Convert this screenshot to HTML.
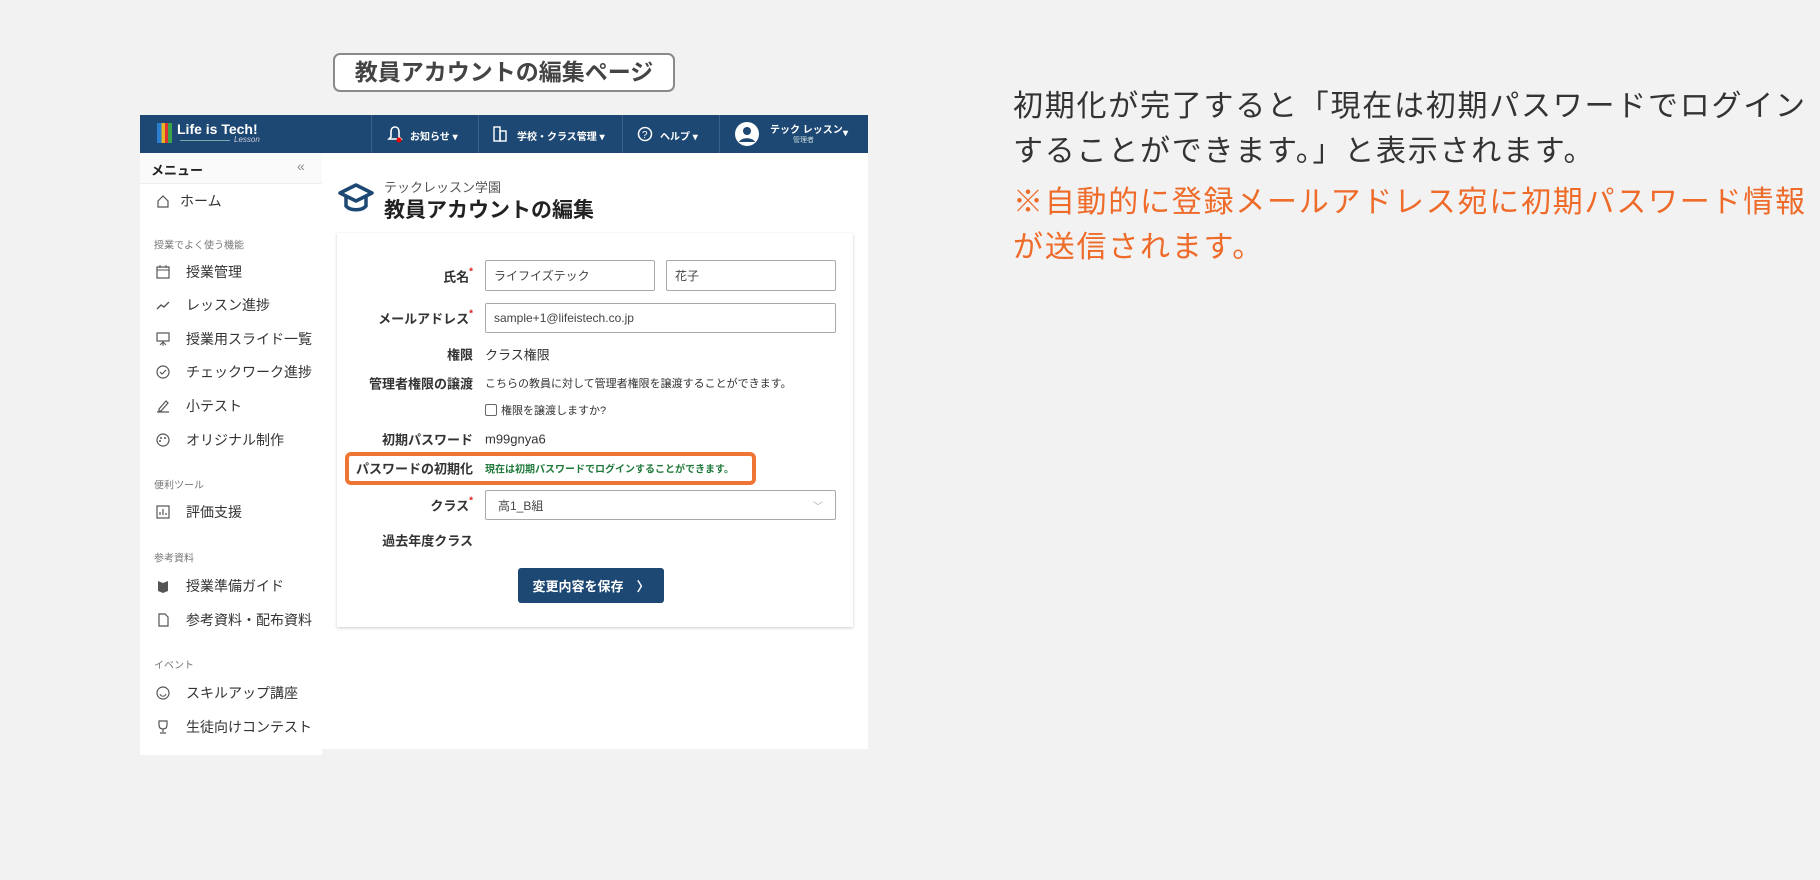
<!DOCTYPE html>
<html><head><meta charset="utf-8"><style>
*{box-sizing:border-box;margin:0;padding:0}
body{width:1820px;height:880px;background:#f2f2f2;font-family:"Liberation Sans","Noto Sans CJK JP",sans-serif;position:relative;overflow:hidden;color:#333}
.abs{position:absolute}
.pill{left:333px;top:53px;width:342px;height:39px;border:2px solid #8a8a8a;border-radius:7px;background:#fff;font-size:23px;font-weight:bold;color:#444;text-align:center;line-height:35px}
.hdr{left:140px;top:115px;width:728px;height:38px;background:#1d4873;color:#fff}
.div{position:absolute;top:0;width:1px;height:38px;background:#3a6189}
.ht{position:absolute;font-size:10px;font-weight:bold;top:13px}
.side{left:140px;top:153px;width:182px;height:602px;background:#fff}
.main{left:322px;top:153px;width:546px;height:596px;background:#fff}
.si{position:absolute;left:46px;font-size:14px;color:#333;transform:translateY(-50%)}
.sec{position:absolute;left:14px;font-size:10px;color:#777;transform:translateY(-50%)}
.ic{position:absolute;left:16px;width:14px;height:14px;transform:translateY(-50%)}
.card{left:337px;top:233px;width:516px;height:394px;background:#fff;box-shadow:0 1px 3px rgba(0,0,0,.2)}
.lb{position:absolute;right:380px;font-size:13px;font-weight:bold;color:#333;transform:translateY(-50%);white-space:nowrap}
.in{position:absolute;border:1px solid #aaa;border-radius:2px;font-size:12px;color:#444;padding-left:8px;display:flex;align-items:center}
.tx{position:absolute;left:148px;font-size:13px;color:#333;transform:translateY(-50%);white-space:nowrap}
.rt{left:1013px;font-size:30px;letter-spacing:1.75px;white-space:nowrap;line-height:45px}
</style></head><body>
<div class="abs pill">教員アカウントの編集ページ</div>

<div class="abs hdr">
 <div style="position:absolute;left:17px;top:8px;width:15px;height:20px;background:linear-gradient(90deg,#2a7fd0 0 30%,#e8b623 30% 55%,#d33 55% 75%,#3aa54a 75%)"></div>
 <div style="position:absolute;left:37px;top:6px;font-size:14px;font-weight:bold">Life is Tech!</div>
 <div style="position:absolute;left:40px;top:25px;width:50px;height:1px;background:#7aa"></div>
 <div style="position:absolute;left:94px;top:20px;font-size:8px;font-style:italic;color:#ccd">Lesson</div>
 <div class="div" style="left:231px"></div><div class="div" style="left:338px"></div><div class="div" style="left:482px"></div><div class="div" style="left:579px"></div>
 <svg style="position:absolute;left:247px;top:10px" width="16" height="18" viewBox="0 0 16 18"><path d="M8 2C5 2 4 4.5 4 7v5l-2 2h12l-2-2V7c0-2.5-1-5-4-5z" fill="none" stroke="#fff" stroke-width="1.6"/><circle cx="12" cy="15" r="2.5" fill="#e00"/></svg>
 <div class="ht" style="left:270px">お知らせ ▾</div>
 <svg style="position:absolute;left:353px;top:11px" width="14" height="16"><rect x="1" y="1" width="6" height="14" fill="none" stroke="#fff" stroke-width="1.4"/><rect x="7" y="5" width="6" height="10" fill="none" stroke="#fff" stroke-width="1.4"/></svg>
 <div class="ht" style="left:377px">学校・クラス管理 ▾</div>
 <svg style="position:absolute;left:497px;top:11px" width="16" height="16"><circle cx="8" cy="8" r="6.5" fill="none" stroke="#fff" stroke-width="1.5"/><text x="5" y="12" font-size="10" fill="#fff" font-family="Liberation Sans">?</text></svg>
 <div class="ht" style="left:520px">ヘルプ ▾</div>
 <svg style="position:absolute;left:595px;top:7px" width="24" height="24"><circle cx="12" cy="12" r="12" fill="#fff"/><circle cx="12" cy="9" r="4" fill="#1d4873"/><path d="M4 20c2-5 14-5 16 0" fill="#1d4873"/></svg>
 <div style="position:absolute;left:630px;top:6px;font-size:10px;font-weight:bold">テック レッスン</div>
 <div style="position:absolute;left:653px;top:20px;font-size:7px;color:#cdd">管理者</div>
 <div class="ht" style="left:703px">▾</div>
</div>

<div class="abs side">
 <div style="position:absolute;left:0;top:0;width:182px;height:31px;border-bottom:1px solid #eee;background:#fafafa"></div>
 <div style="position:absolute;left:11px;top:7px;font-size:13px;font-weight:bold;color:#222">メニュー</div>
 <div style="position:absolute;left:157px;top:5px;font-size:14px;color:#888">«</div>
 <svg class="ic" style="top:48px" viewBox="0 0 14 14"><path d="M2 7L7 2l5 5v6H2z" fill="none" stroke="#555" stroke-width="1.2"/></svg><div class="si" style="top:48px;left:40px">ホーム</div>
 <div class="sec" style="top:91px">授業でよく使う機能</div>
 <svg class="ic" style="top:119px" viewBox="0 0 14 14"><rect x="1" y="2" width="12" height="11" fill="none" stroke="#555" stroke-width="1.2"/><path d="M1 5h12M4 0v3M10 0v3" stroke="#555"/></svg><div class="si" style="top:119px">授業管理</div>
 <svg class="ic" style="top:152px" viewBox="0 0 14 14"><path d="M1 11l4-4 3 2 5-5" fill="none" stroke="#555" stroke-width="1.4"/></svg><div class="si" style="top:152px">レッスン進捗</div>
 <svg class="ic" style="top:186px" viewBox="0 0 14 14"><rect x="1" y="1" width="12" height="8" fill="none" stroke="#555" stroke-width="1.2"/><path d="M7 9v5M4 13l3-3 3 3" stroke="#555" fill="none"/></svg><div class="si" style="top:186px">授業用スライド一覧</div>
 <svg class="ic" style="top:219px" viewBox="0 0 14 14"><circle cx="7" cy="7" r="6" fill="none" stroke="#555" stroke-width="1.2"/><path d="M4 7l2 2 4-4" fill="none" stroke="#555" stroke-width="1.2"/></svg><div class="si" style="top:219px">チェックワーク進捗</div>
 <svg class="ic" style="top:253px" viewBox="0 0 14 14"><path d="M3 10l7-8 2 2-7 8H3zM1 13h12" fill="none" stroke="#555" stroke-width="1.2"/></svg><div class="si" style="top:253px">小テスト</div>
 <svg class="ic" style="top:287px" viewBox="0 0 14 14"><circle cx="7" cy="7" r="6" fill="none" stroke="#555" stroke-width="1.2"/><circle cx="5" cy="5" r="1" fill="#555"/><circle cx="9" cy="5" r="1" fill="#555"/><circle cx="4" cy="8" r="1" fill="#555"/></svg><div class="si" style="top:287px">オリジナル制作</div>
 <div class="sec" style="top:331px">便利ツール</div>
 <svg class="ic" style="top:359px" viewBox="0 0 14 14"><rect x="1" y="1" width="12" height="12" fill="none" stroke="#555" stroke-width="1.2"/><path d="M4 10V7M7 10V4M10 10V8" stroke="#555" stroke-width="1.2"/></svg><div class="si" style="top:359px">評価支援</div>
 <div class="sec" style="top:404px">参考資料</div>
 <svg class="ic" style="top:433px" viewBox="0 0 14 14"><path d="M2 2l5 2 5-2v10l-5 2-5-2z" fill="#555"/></svg><div class="si" style="top:433px">授業準備ガイド</div>
 <svg class="ic" style="top:467px" viewBox="0 0 14 14"><path d="M3 1h6l3 3v9H3z" fill="none" stroke="#555" stroke-width="1.2"/></svg><div class="si" style="top:467px">参考資料・配布資料</div>
 <div class="sec" style="top:511px">イベント</div>
 <svg class="ic" style="top:540px" viewBox="0 0 14 14"><circle cx="7" cy="7" r="6" fill="none" stroke="#555" stroke-width="1.2"/><path d="M4 8c1 3 5 3 6 0" fill="none" stroke="#555"/></svg><div class="si" style="top:540px">スキルアップ講座</div>
 <svg class="ic" style="top:574px" viewBox="0 0 14 14"><path d="M3 1h8v4c0 3-2 4-4 4S3 8 3 5zM7 9v3M4 13h6" fill="none" stroke="#555" stroke-width="1.2"/></svg><div class="si" style="top:574px">生徒向けコンテスト</div>
</div>

<div class="abs main">
 <svg style="position:absolute;left:15px;top:29px" width="38" height="34" viewBox="0 0 38 34"><path d="M3 11L19 3l16 8-16 8z" fill="none" stroke="#1d4873" stroke-width="3.5" stroke-linejoin="round"/><path d="M9 15v9c4 5 16 5 20 0v-9" fill="none" stroke="#1d4873" stroke-width="3.5"/></svg>
 <div style="position:absolute;left:62px;top:24px;font-size:13px;color:#555">テックレッスン学園</div>
 <div style="position:absolute;left:62px;top:41px;font-size:21px;font-weight:bold;color:#222">教員アカウントの編集</div>
</div>

<div class="abs card">
 <div class="lb" style="top:43px">氏名<span style="color:#d22;font-size:10px;vertical-align:top">*</span></div>
 <div class="in" style="left:148px;top:27px;width:170px;height:31px">ライフイズテック</div>
 <div class="in" style="left:329px;top:27px;width:170px;height:31px">花子</div>
 <div class="lb" style="top:85px">メールアドレス<span style="color:#d22;font-size:10px;vertical-align:top">*</span></div>
 <div class="in" style="left:148px;top:70px;width:351px;height:30px">sample+1@lifeistech.co.jp</div>
 <div class="lb" style="top:121px">権限</div><div class="tx" style="top:121px">クラス権限</div>
 <div class="lb" style="top:150px">管理者権限の譲渡</div><div class="tx" style="top:150px;font-size:11px">こちらの教員に対して管理者権限を譲渡することができます。</div>
 <div class="tx" style="top:177px;font-size:11px"><span style="display:inline-block;width:12px;height:12px;border:1px solid #666;border-radius:2px;vertical-align:-2px;margin-right:4px"></span>権限を譲渡しますか?</div>
 <div class="lb" style="top:206px">初期パスワード</div><div class="tx" style="top:206px">m99gnya6</div>
 <div style="position:absolute;left:8px;top:219px;width:411px;height:33px;border:4px solid #ee7534;border-radius:6px"></div>
 <div class="lb" style="top:235px">パスワードの初期化</div><div class="tx" style="top:235px;font-size:10px;font-weight:bold;color:#1f7a3a">現在は初期パスワードでログインすることができます。</div>
 <div class="lb" style="top:272px">クラス<span style="color:#d22;font-size:10px;vertical-align:top">*</span></div>
 <div class="in" style="left:148px;top:257px;width:351px;height:30px;padding-left:12px">高1_B組<span style="position:absolute;right:12px;color:#aaa;font-size:10px">﹀</span></div>
 <div class="lb" style="top:307px">過去年度クラス</div>
 <div style="position:absolute;left:181px;top:335px;width:146px;height:35px;background:#1d4873;border-radius:3px;color:#fff;font-size:13px;font-weight:bold;display:flex;align-items:center;justify-content:center">変更内容を保存　〉</div>
</div>

<div class="abs rt" style="top:84px;color:#333">初期化が完了すると「現在は初期パスワードでログイン<br>することができます。」と表示されます。</div>
<div class="abs rt" style="top:180px;color:#ee6b2a">※自動的に登録メールアドレス宛に初期パスワード情報<br>が送信されます。</div>
</body></html>
